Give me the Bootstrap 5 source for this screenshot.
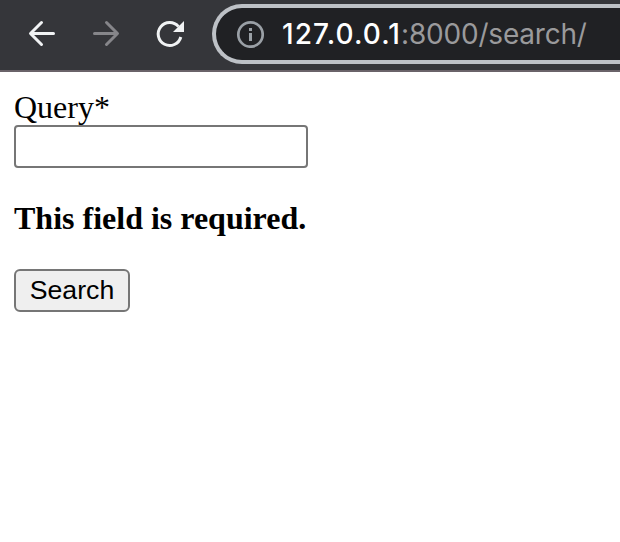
<!DOCTYPE html>
<html lang="en">
<head>
<meta charset="utf-8">
<title>Search</title>
<link href="https://cdn.jsdelivr.net/npm/bootstrap@5.3.0/dist/css/bootstrap.min.css" rel="stylesheet">
<style>
body { font-family: "Liberation Serif", "Times New Roman", serif; font-size: 32px; line-height: 36px; color: #000; background: #fff; }
.toolbar { height: 72px; background: #35363a; border-bottom: 2px solid #6a6369; padding-bottom: 2px; }
.nav-icons { width: 212px; flex: none; }
.nav-icons svg { display: block; width: 212px; height: 68px; }
.address { height: 60px; background: #202124; border: 4px solid #bdc1c6; border-right: 0; border-radius: 30px 0 0 30px; padding-left: 20px; }
.address svg { flex: none; width: 28px; height: 28px; }
.url { font-family: Inter, sans-serif; font-size: 28px; line-height: 52px; margin-left: 18px; color: #9a9a9c; white-space: nowrap; }
.host { color: #fff; font-weight: 500; letter-spacing: 1.1px; }
.path-part { letter-spacing: -.2px; }
.search-form { padding: 17px 14px 0; }
.query-input { width: 294px; height: 43px; border: 2px solid #767676; border-radius: 5px; }
.query-input:focus { box-shadow: none; border-color: #767676; }
.error-text { margin: 32px 0 33px; }
.search-btn { width: 116px; height: 43px; font-family: "Liberation Sans", Arial, sans-serif; font-size: 26.67px; line-height: 36px; padding: 0 0 2px; color: #000; background: #efefef; border: 2px solid #767676; border-radius: 6px; }
</style>
</head>
<body class="overflow-hidden">
<header class="toolbar d-flex align-items-center overflow-hidden">
  <div class="nav-icons">
    <svg viewBox="0 0 212 68" fill="none" stroke-width="3" stroke-linecap="round" stroke-linejoin="round">
      <path stroke="#f1f3f4" d="M53.5 33.5H31M41.500 22.500L30.500 33.500L41.500 44.500"/>
      <path stroke="#86868a" d="M94.500 33.500H117M106.500 22.500L117.500 33.500L106.500 44.500"/>
      <path stroke="#f1f3f4" stroke-linecap="butt" d="M178.500 26.600A11.500 11.500 0 1 0 180.800 37"/>
      <path fill="#f1f3f4" d="M184 21V32H173Z"/>
    </svg>
  </div>
  <div class="address flex-grow-1 d-flex align-items-center">
    <svg viewBox="0 0 28 28" fill="none"><circle cx="14.500" cy="14.500" r="12.200" stroke="#9aa0a6" stroke-width="2.700"/><path fill="#9aa0a6" d="M13 8h3v3h-3zM13 13h3v8h-3z"/></svg>
    <div class="url"><span class="host">127.0.0.1</span><span class="path-part">:8000/search/</span></div>
  </div>
</header>
<main>
  <form class="search-form">
    <label class="d-block" for="query">Query*</label>
    <input class="form-control rounded-1 query-input" id="query" type="text">
    <p class="fw-bold error-text">This field is required.</p>
    <button class="btn d-block search-btn" type="button">Search</button>
  </form>
</main>
<script src="https://cdn.jsdelivr.net/npm/bootstrap@5.3.0/dist/js/bootstrap.bundle.min.js"></script>
</body>
</html>
